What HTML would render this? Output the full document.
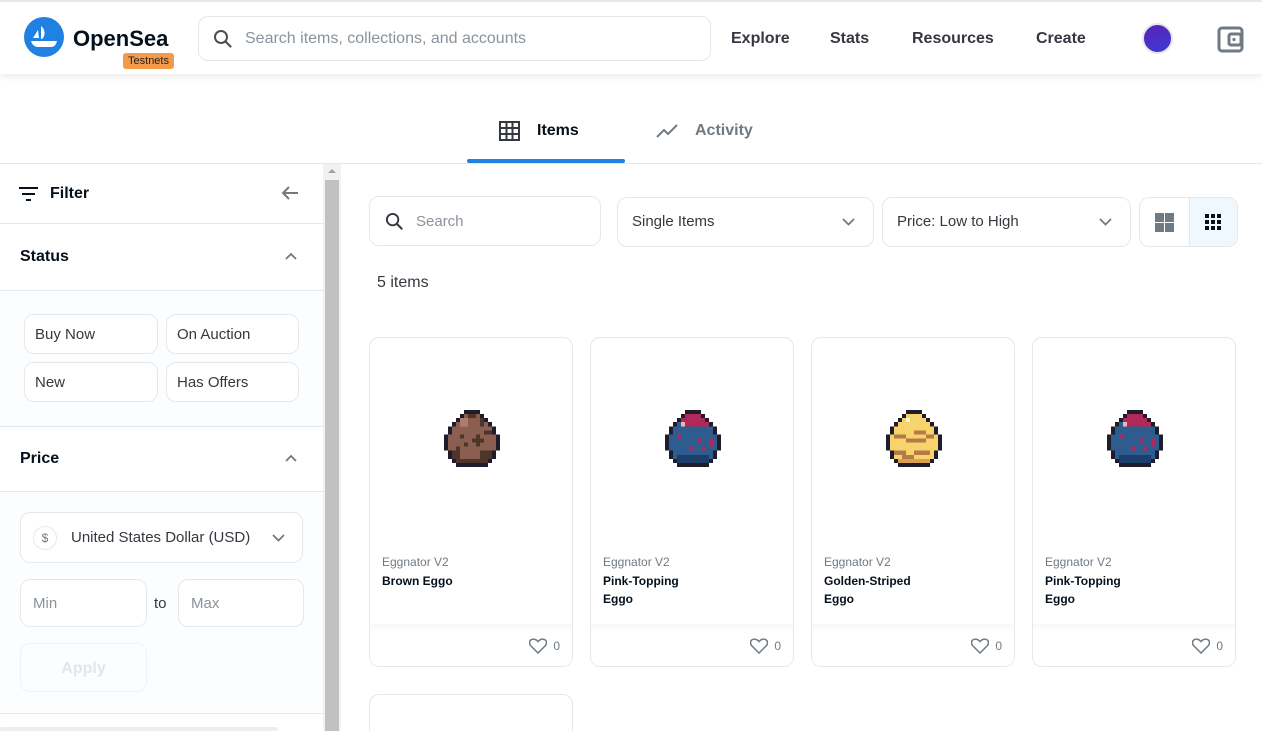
<!DOCTYPE html>
<html style="height:731px;overflow:hidden"><head><meta charset="utf-8"><style>
*{box-sizing:border-box;margin:0;padding:0}
body{width:1262px;height:731px;overflow:hidden;font-family:"Liberation Sans",sans-serif;color:#04111d;background:#fff;position:relative}
.abs{position:absolute}
.hdr{left:0;top:0;width:1262px;height:74px;border-top:2px solid #e5e8eb;background:#fff;box-shadow:0 3px 6px rgba(0,0,0,.08);z-index:2}
.nav{font-size:16px;font-weight:bold;color:#353840;top:28px}
.box{border:1px solid #e5e8eb;border-radius:10px;background:#fff}
.card{border:1px solid #e5e8eb;border-radius:10px;background:#fff;width:204px;height:330px;overflow:hidden}
.card .ft{position:absolute;left:0;right:0;bottom:0;height:42px;background:linear-gradient(#f7f8f9,#fff 8px)}
.card .c{position:absolute;left:12px;top:217px;font-size:12px;color:#707a83}
.card .n{position:absolute;left:12px;top:234px;font-size:12px;font-weight:bold;line-height:18px;color:#04111d;width:150px}
.card .lk{position:absolute;right:12px;bottom:12px;font-size:12px;color:#707a83;display:flex;align-items:center;gap:6px}
.card svg.egg{position:absolute;left:74px;top:72px}
.sb{color:#353840;font-size:15px}
</style></head><body>
<div class="abs hdr">
  <svg class="abs" style="left:24px;top:15px" width="40" height="40" viewBox="0 0 40 40"><circle cx="20" cy="20" r="20" fill="#2081e2"/><path d="M9 21l5-8 1 8z" fill="#fff"/><path d="M17 9c4 3 5 9 1 13h-1z" fill="#fff"/><path d="M7 24h26c-1 4-3 6-6 6H14c-4 0-6-3-7-6z" fill="#fff"/></svg>
  <div class="abs" style="left:73px;top:24px;font-size:22px;font-weight:bold;color:#04111d">OpenSea</div>
  <div class="abs" style="left:123px;top:51px;width:51px;height:16px;background:#f2994a;border-radius:3px;font-size:11px;text-align:center;line-height:16px;color:#222">Testnets</div>
  <div class="abs box" style="left:198px;top:14px;width:513px;height:45px"></div>
  <svg class="abs" style="left:213px;top:27px" width="20" height="20" viewBox="0 0 20 20"><circle cx="8" cy="8" r="6" fill="none" stroke="#4a4f56" stroke-width="2"/><path d="M12.5 12.5l5 5" stroke="#4a4f56" stroke-width="2.2" stroke-linecap="round"/></svg>
  <div class="abs" style="left:245px;top:28px;font-size:16px;color:#8a939b">Search items, collections, and accounts</div>
  <div class="abs nav" style="left:731px">Explore</div>
  <div class="abs nav" style="left:830px">Stats</div>
  <div class="abs nav" style="left:912px">Resources</div>
  <div class="abs nav" style="left:1036px">Create</div>
  <div class="abs" style="left:1142px;top:21px;width:31px;height:31px;border-radius:50%;border:2px solid #e5e8eb;background:linear-gradient(160deg,#5a22b8,#3b3bd6)"></div>
  <svg class="abs" style="left:1217px;top:24px" width="27" height="27" viewBox="0 0 27 27"><rect x="2" y="2" width="23" height="23" rx="3" fill="none" stroke="#707a83" stroke-width="3"/><rect x="12" y="8" width="12" height="11" rx="2" fill="none" stroke="#707a83" stroke-width="3"/><circle cx="17" cy="13.5" r="1.6" fill="#707a83"/></svg>
</div>

<!-- tabs -->
<svg class="abs" style="left:499px;top:121px" width="21" height="20" viewBox="0 0 21 20"><rect x="1" y="1" width="19" height="18" fill="none" stroke="#353840" stroke-width="2"/><path d="M1 7h19M1 13h19M7.5 1v18M13.5 1v18" stroke="#353840" stroke-width="2"/></svg>
<div class="abs" style="left:537px;top:122px;font-size:16px;font-weight:bold;color:#04111d">Items</div>
<div class="abs" style="left:467px;top:159px;width:158px;height:4px;background:#2081e2;border-radius:2px"></div>
<svg class="abs" style="left:656px;top:123px" width="23" height="16" viewBox="0 0 23 16"><path d="M1 14l7-7 4 4 9-9" fill="none" stroke="#707a83" stroke-width="2"/></svg>
<div class="abs" style="left:695px;top:122px;font-size:16px;font-weight:bold;color:#707a83">Activity</div>
<div class="abs" style="left:0;top:163px;width:1262px;height:1px;background:#e5e8eb"></div>

<!-- sidebar -->
<div class="abs" style="left:0;top:164px;width:323px;height:567px;background:#fff"></div>
<svg class="abs" style="left:19px;top:187px" width="19" height="14" viewBox="0 0 19 14"><path d="M0 1h19M3 7h13M7 13h5" stroke="#04111d" stroke-width="2"/></svg>
<div class="abs" style="left:50px;top:185px;font-size:16px;font-weight:bold">Filter</div>
<svg class="abs" style="left:281px;top:185px" width="18" height="16" viewBox="0 0 18 16"><path d="M17 8H2M8 2L2 8l6 6" fill="none" stroke="#707a83" stroke-width="2"/></svg>
<div class="abs" style="left:0;top:223px;width:323px;height:1px;background:#e5e8eb"></div>
<div class="abs" style="left:20px;top:248px;font-size:16px;font-weight:bold">Status</div>
<svg class="abs" style="left:285px;top:252px" width="12" height="8" viewBox="0 0 12 8"><path d="M1 7l5-5 5 5" fill="none" stroke="#707a83" stroke-width="1.8"/></svg>
<div class="abs" style="left:0;top:290px;width:323px;height:137px;background:#fbfdff;border-top:1px solid #e5e8eb;border-bottom:1px solid #e5e8eb"></div>
<div class="abs box sb" style="left:24px;top:314px;width:134px;height:40px;padding:11px 10px">Buy Now</div>
<div class="abs box sb" style="left:166px;top:314px;width:133px;height:40px;padding:11px 10px">On Auction</div>
<div class="abs box sb" style="left:24px;top:362px;width:134px;height:40px;padding:11px 10px">New</div>
<div class="abs box sb" style="left:166px;top:362px;width:133px;height:40px;padding:11px 10px">Has Offers</div>
<div class="abs" style="left:20px;top:450px;font-size:16px;font-weight:bold">Price</div>
<svg class="abs" style="left:285px;top:454px" width="12" height="8" viewBox="0 0 12 8"><path d="M1 7l5-5 5 5" fill="none" stroke="#707a83" stroke-width="1.8"/></svg>
<div class="abs" style="left:0;top:491px;width:323px;height:223px;background:#fbfdff;border-top:1px solid #e5e8eb;border-bottom:1px solid #e5e8eb"></div>
<div class="abs box" style="left:20px;top:512px;width:283px;height:51px"></div>
<div class="abs" style="left:33px;top:526px;width:24px;height:24px;border-radius:50%;border:1px solid #e5e8eb;font-size:12px;color:#707a83;text-align:center;line-height:22px">$</div>
<div class="abs sb" style="left:71px;top:529px;width:182px;overflow:hidden;white-space:nowrap">United States Dollar (USD)</div>
<svg class="abs" style="left:272px;top:534px" width="13" height="8" viewBox="0 0 13 8"><path d="M1 1l5.5 5.5L12 1" fill="none" stroke="#707a83" stroke-width="1.8"/></svg>
<div class="abs box" style="left:20px;top:579px;width:127px;height:48px;padding:15px 12px;font-size:15px;color:#8a939b">Min</div>
<div class="abs sb" style="left:154px;top:595px">to</div>
<div class="abs box" style="left:178px;top:579px;width:126px;height:48px;padding:15px 12px;font-size:15px;color:#8a939b">Max</div>
<div class="abs" style="left:20px;top:643px;width:127px;height:49px;border:1px solid #f0f2f4;border-radius:10px;font-size:16px;font-weight:bold;color:#e3e5e8;text-align:center;line-height:49px">Apply</div>
<div class="abs" style="left:0;top:727px;width:278px;height:4px;background:#eee;border-radius:2px"></div>
<!-- scrollbar -->
<div class="abs" style="left:323px;top:164px;width:18px;height:567px;background:#f1f1f1"></div>
<div class="abs" style="left:325px;top:180px;width:14px;height:551px;background:#c1c1c1"></div>
<svg class="abs" style="left:327px;top:168px" width="10" height="6"><path d="M1 5l4-4 4 4z" fill="#a3a3a3"/></svg>

<!-- main controls -->
<div class="abs box" style="left:369px;top:196px;width:232px;height:50px"></div>
<svg class="abs" style="left:385px;top:212px" width="19" height="19" viewBox="0 0 20 20"><circle cx="8" cy="8" r="6" fill="none" stroke="#353840" stroke-width="2"/><path d="M12.5 12.5l5 5" stroke="#353840" stroke-width="2.2" stroke-linecap="round"/></svg>
<div class="abs" style="left:416px;top:213px;font-size:15px;color:#8a939b">Search</div>
<div class="abs box" style="left:617px;top:197px;width:257px;height:50px"></div>
<div class="abs sb" style="left:632px;top:213px">Single Items</div>
<svg class="abs" style="left:842px;top:218px" width="13" height="8" viewBox="0 0 13 8"><path d="M1 1l5.5 5.5L12 1" fill="none" stroke="#707a83" stroke-width="1.8"/></svg>
<div class="abs box" style="left:882px;top:197px;width:249px;height:50px"></div>
<div class="abs sb" style="left:897px;top:213px">Price: Low to High</div>
<svg class="abs" style="left:1099px;top:218px" width="13" height="8" viewBox="0 0 13 8"><path d="M1 1l5.5 5.5L12 1" fill="none" stroke="#707a83" stroke-width="1.8"/></svg>
<div class="abs box" style="left:1139px;top:197px;width:99px;height:50px;overflow:hidden"><div style="position:absolute;left:49px;top:0;width:50px;height:50px;background:#f0f8fe;border-left:1px solid #e5e8eb"></div></div>
<svg class="abs" style="left:1155px;top:213px" width="19" height="19"><rect x="0" y="0" width="9" height="9" fill="#707a83"/><rect x="10" y="0" width="9" height="9" fill="#707a83"/><rect x="0" y="10" width="9" height="9" fill="#707a83"/><rect x="10" y="10" width="9" height="9" fill="#707a83"/></svg>
<svg class="abs" style="left:1205px;top:214px" width="17" height="17" fill="#04111d"><rect x="0" y="0" width="4" height="4"/><rect x="6" y="0" width="4" height="4"/><rect x="12" y="0" width="4" height="4"/><rect x="0" y="6" width="4" height="4"/><rect x="6" y="6" width="4" height="4"/><rect x="12" y="6" width="4" height="4"/><rect x="0" y="12" width="4" height="4"/><rect x="6" y="12" width="4" height="4"/><rect x="12" y="12" width="4" height="4"/></svg>
<div class="abs" style="left:377px;top:274px;font-size:16px;color:#353840">5 items</div>

<svg width="0" height="0" style="position:absolute"><defs>
<path id="o" d="M5 0H9V1H10V2H11V3H12V4H13V6H14V10H13V12H12V13H11V14H3V13H2V12H1V10H0V6H1V4H2V3H3V2H4V1H5Z"/>
<path id="i" d="M5 1H9V2H10V3H11V4H12V6H13V10H12V12H11V13H3V12H2V10H1V6H2V4H3V3H4V2H5Z"/>
</defs></svg>

<div class="abs card" style="left:369px;top:337px">
  <svg class="egg" width="56" height="57" viewBox="0 0 14 14" preserveAspectRatio="none" shape-rendering="crispEdges"><use href="#o" fill="#1f1d2b"/><use href="#i" fill="#8a5f52"/><path d="M6 1h2v1H6zM9 2h1v2H9zM10 5h2v1h-2zM4 6h1v1H4zM7 7h1v1H7zM8 6h1v3H8zM7 7h3v1H7zM3 9h1v1H3zM5 8h1v1H5zM9 10h3v2H9zM2 10h2v2H2zM3 12h8v1H3z" fill="#4e3529"/><path d="M4 2h2v2H4z" fill="#b07c6e"/></svg>
  <div class="c">Eggnator V2</div><div class="n">Brown Eggo</div>
  <div class="ft"></div><div class="lk"><svg width="18" height="16" viewBox="0 0 18 16"><path d="M9 15L2 8C0 6 0 3 2 1.8 4 .5 7 1 9 3.5 11 1 14 .5 16 1.8c2 1.2 2 4.2 0 6.2z" fill="none" stroke="#707a83" stroke-width="1.5"/></svg>0</div>
</div>
<div class="abs card" style="left:590px;top:337px">
  <svg class="egg" width="56" height="57" viewBox="0 0 14 14" preserveAspectRatio="none" shape-rendering="crispEdges"><use href="#o" fill="#1f1d2b"/><use href="#i" fill="#2e5c8f"/><path d="M5 1H9V2H10V3H11V4H4V3H4V2H5Z" fill="#b0295a"/><path d="M4 3h1v1H4z" fill="#f4b4b4"/><path d="M3 6h1v1H3zM8 7h1v1H8zM11 7h1v2h-1zM6 9h1v1H6zM9 9h1v1H9zM4 11h1v1H4z" fill="#b0295a"/><path d="M3 11H11V12H11V13H3z" fill="#1c3e6b"/></svg>
  <div class="c">Eggnator V2</div><div class="n">Pink-Topping<br>Eggo</div>
  <div class="ft"></div><div class="lk"><svg width="18" height="16" viewBox="0 0 18 16"><path d="M9 15L2 8C0 6 0 3 2 1.8 4 .5 7 1 9 3.5 11 1 14 .5 16 1.8c2 1.2 2 4.2 0 6.2z" fill="none" stroke="#707a83" stroke-width="1.5"/></svg>0</div>
</div>
<div class="abs card" style="left:811px;top:337px">
  <svg class="egg" width="56" height="57" viewBox="0 0 14 14" preserveAspectRatio="none" shape-rendering="crispEdges"><use href="#o" fill="#1f1d2b"/><use href="#i" fill="#f6d36b"/><path d="M5 2h1v1H5z" fill="#fff7d4"/><path d="M2 6h3v1H2zM7 5h3v1H7zM10 6h2v1h-2zM5 7h5v1H5zM2 10h3v1H2zM7 10h4v1H7zM4 11h3v1H4z" fill="#b57a4a"/><path d="M3 12h8v1H3z" fill="#d9a050"/></svg>
  <div class="c">Eggnator V2</div><div class="n">Golden-Striped<br>Eggo</div>
  <div class="ft"></div><div class="lk"><svg width="18" height="16" viewBox="0 0 18 16"><path d="M9 15L2 8C0 6 0 3 2 1.8 4 .5 7 1 9 3.5 11 1 14 .5 16 1.8c2 1.2 2 4.2 0 6.2z" fill="none" stroke="#707a83" stroke-width="1.5"/></svg>0</div>
</div>
<div class="abs card" style="left:1032px;top:337px">
  <svg class="egg" width="56" height="57" viewBox="0 0 14 14" preserveAspectRatio="none" shape-rendering="crispEdges"><use href="#o" fill="#1f1d2b"/><use href="#i" fill="#2e5c8f"/><path d="M5 1H9V2H10V3H11V4H4V3H4V2H5Z" fill="#b0295a"/><path d="M4 3h1v1H4z" fill="#f4b4b4"/><path d="M3 6h1v1H3zM8 7h1v1H8zM11 7h1v2h-1zM6 9h1v1H6zM9 9h1v1H9zM4 11h1v1H4z" fill="#b0295a"/><path d="M3 11H11V12H11V13H3z" fill="#1c3e6b"/></svg>
  <div class="c">Eggnator V2</div><div class="n">Pink-Topping<br>Eggo</div>
  <div class="ft"></div><div class="lk"><svg width="18" height="16" viewBox="0 0 18 16"><path d="M9 15L2 8C0 6 0 3 2 1.8 4 .5 7 1 9 3.5 11 1 14 .5 16 1.8c2 1.2 2 4.2 0 6.2z" fill="none" stroke="#707a83" stroke-width="1.5"/></svg>0</div>
</div>
<div class="abs card" style="left:369px;top:694px;height:37px;border-bottom:none;border-radius:10px 10px 0 0"></div>
</body></html>
